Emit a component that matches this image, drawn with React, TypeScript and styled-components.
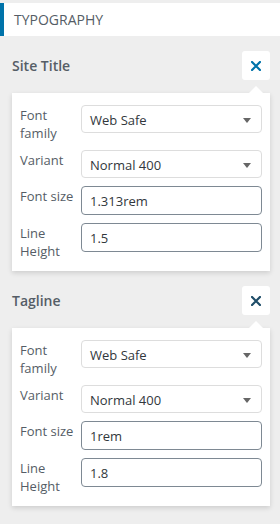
import styled, { createGlobalStyle } from "styled-components";

const GlobalStyle = createGlobalStyle`
  body {
    margin: 0;
    background: #eeeeee;
    font-family: "Open Sans", "Noto Sans", sans-serif;
    color: #555d66;
  }
`;

type Field = { label: string; kind: "select" | "input"; value: string };

const groups: { title: string; active: boolean; fields: Field[] }[] = [
  {
    title: "Site Title",
    active: true,
    fields: [
      { label: "Font family", kind: "select", value: "Web Safe" },
      { label: "Variant", kind: "select", value: "Normal 400" },
      { label: "Font size", kind: "input", value: "1.313rem" },
      { label: "Line Height", kind: "input", value: "1.5" },
    ],
  },
  {
    title: "Tagline",
    active: false,
    fields: [
      { label: "Font family", kind: "select", value: "Web Safe" },
      { label: "Variant", kind: "select", value: "Normal 400" },
      { label: "Font size", kind: "input", value: "1rem" },
      { label: "Line Height", kind: "input", value: "1.8" },
    ],
  },
];

function CloseIcon() {
  return (
    <svg width="10" height="10" viewBox="0 0 10 10">
      <path d="M1 1 L9 9 M9 1 L1 9" stroke="currentColor" strokeWidth="2.2" strokeLinecap="square" />
    </svg>
  );
}

export default function App() {
  return (
    <>
      <GlobalStyle />
      <Page>
        <SectionHeader>Typography</SectionHeader>
        {groups.map((g) => (
          <Group key={g.title}>
            <GroupHead>
              <GroupTitle>{g.title}</GroupTitle>
              <CloseButton $active={g.active}>
                <CloseIcon />
              </CloseButton>
            </GroupHead>
            <Card>
              {g.fields.map((f) => (
                <Row key={f.label}>
                  <Label>{f.label}</Label>
                  {f.kind === "select" ? (
                    <Select>
                      <span>{f.value}</span>
                      <Arrow />
                    </Select>
                  ) : (
                    <TextInput defaultValue={f.value} />
                  )}
                </Row>
              ))}
            </Card>
          </Group>
        ))}
      </Page>
    </>
  );
}

const Page = styled.div`
  width: 280px;
  min-height: 524px;
  padding-top: 3px;
  box-sizing: border-box;
`;

const SectionHeader = styled.h3`
  margin: 0;
  height: 33px;
  background: #fff;
  border-left: 4px solid #0073aa;
  padding-left: 10px;
  display: flex;
  align-items: center;
  font-size: 14px;
  font-weight: 400;
  text-transform: uppercase;
  color: #555d66;
`;

const Group = styled.div`
  padding: 15px 10px 0 12px;
`;

const GroupHead = styled.div`
  display: flex;
  align-items: center;
  justify-content: space-between;
  height: 29px;
  margin-bottom: 13px;
`;

const GroupTitle = styled.span`
  font-size: 14px;
  font-weight: 600;
  color: #555d66;
`;

const CloseButton = styled.button<{ $active: boolean }>`
  width: 28px;
  height: 29px;
  padding: 0;
  border: none;
  border-radius: 3px;
  background: #fff;
  display: flex;
  align-items: center;
  justify-content: center;
  color: ${(p) => (p.$active ? "#0073aa" : "#1f4d68")};
  cursor: pointer;
`;

const Card = styled.div`
  position: relative;
  background: #fff;
  box-shadow: 0 2px 5px rgba(0, 0, 0, 0.14);
  padding: 12px 8px 11px 8px;
  display: flex;
  flex-direction: column;
  gap: 8px;

  &::before {
    content: "";
    position: absolute;
    top: -7px;
    right: 7px;
    border-left: 7px solid transparent;
    border-right: 7px solid transparent;
    border-bottom: 7px solid #fff;
  }
`;

const Row = styled.div`
  display: flex;
  align-items: flex-start;
  gap: 6px;
`;

const Label = styled.label`
  width: 55px;
  flex-shrink: 0;
  font-size: 13px;
  line-height: 18px;
  padding-top: 1px;
  color: #555d66;
`;

const Select = styled.div`
  flex: 1;
  height: 28px;
  box-sizing: border-box;
  border: 1px solid #dddddd;
  border-radius: 4px;
  display: flex;
  align-items: center;
  justify-content: space-between;
  padding: 2px 10px 0 8px;
  font-size: 13px;
  color: #32373c;
`;

const Arrow = styled.span`
  width: 0;
  height: 0;
  border-left: 4px solid transparent;
  border-right: 4px solid transparent;
  border-top: 5px solid #666;
`;

const TextInput = styled.input`
  flex: 1;
  min-width: 0;
  height: 29px;
  box-sizing: border-box;
  border: 1px solid #7e8993;
  border-radius: 4px;
  padding: 0 8px;
  font-family: inherit;
  font-size: 13px;
  color: #32373c;
  background: #fff;
`;
